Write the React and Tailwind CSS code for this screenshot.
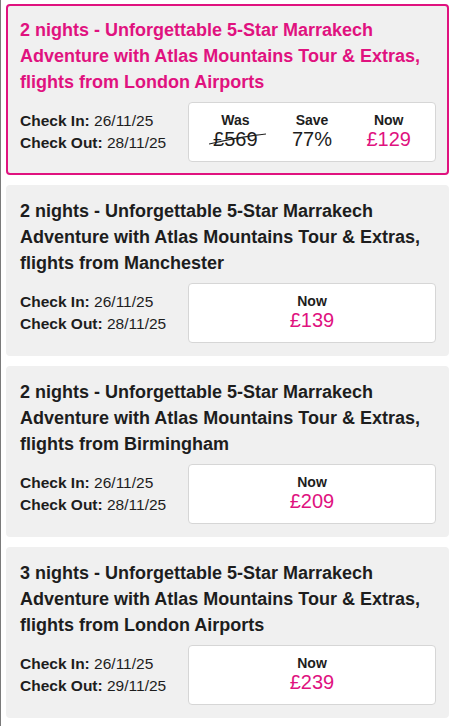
const deals = [
  {
    title: '2 nights - Unforgettable 5-Star Marrakech Adventure with Atlas Mountains Tour & Extras, flights from London Airports',
    checkIn: '26/11/25',
    checkOut: '28/11/25',
    was: '£569',
    save: '77%',
    now: '£129',
    active: true,
  },
  {
    title: '2 nights - Unforgettable 5-Star Marrakech Adventure with Atlas Mountains Tour & Extras, flights from Manchester',
    checkIn: '26/11/25',
    checkOut: '28/11/25',
    now: '£139',
  },
  {
    title: '2 nights - Unforgettable 5-Star Marrakech Adventure with Atlas Mountains Tour & Extras, flights from Birmingham',
    checkIn: '26/11/25',
    checkOut: '28/11/25',
    now: '£209',
  },
  {
    title: '3 nights - Unforgettable 5-Star Marrakech Adventure with Atlas Mountains Tour & Extras, flights from London Airports',
    checkIn: '26/11/25',
    checkOut: '29/11/25',
    now: '£239',
  },
];

function PriceCol({ label, children }) {
  return (
    <div className="flex flex-col items-center">
      <span className="text-[14px] leading-[16px] font-bold text-[#1d1d1d]">{label}</span>
      {children}
    </div>
  );
}

function DealCard({ deal }) {
  return (
    <div
      className={`rounded-[4px] border-2 bg-[#f0f0f0] pt-[11px] pb-[11px] pl-[12px] pr-[11px] ${
        deal.active ? 'border-[#e0127f]' : 'border-[#f0f0f0]'
      }`}
    >
      <h2
        className={`text-[18px] leading-[26px] font-bold mb-[7px] ${
          deal.active ? 'text-[#e0127f]' : 'text-[#1d1d1d]'
        }`}
      >
        {deal.title}
      </h2>
      <div className="flex items-center justify-between">
        <div className="text-[15.5px] leading-[22px] text-[#1d1d1d]">
          <p>
            <span className="font-bold">Check In:</span> {deal.checkIn}
          </p>
          <p>
            <span className="font-bold">Check Out:</span> {deal.checkOut}
          </p>
        </div>
        <div className="w-[248px] h-[60px] bg-white border border-[#d6d6d6] rounded-[4px] px-[8px] pb-[1px] flex flex-col justify-center">
          {deal.was ? (
            <div className="grid grid-cols-3">
              <PriceCol label="Was">
                <span className="relative text-[20px] leading-[23px] text-[#1d1d1d]">
                  {deal.was}
                  <svg
                    className="absolute left-[-4px] top-[4px]"
                    width="57"
                    height="14"
                    viewBox="0 0 57 14"
                  >
                    <path d="M0 12 Q 28 5 57 2" stroke="#1d1d1d" strokeWidth="1.1" fill="none" />
                  </svg>
                </span>
              </PriceCol>
              <PriceCol label="Save">
                <span className="text-[20px] leading-[23px] text-[#1d1d1d]">{deal.save}</span>
              </PriceCol>
              <PriceCol label="Now">
                <span className="text-[20px] leading-[23px] text-[#e0127f]">{deal.now}</span>
              </PriceCol>
            </div>
          ) : (
            <PriceCol label="Now">
              <span className="text-[20px] leading-[23px] text-[#e0127f]">{deal.now}</span>
            </PriceCol>
          )}
        </div>
      </div>
    </div>
  );
}

export default function App() {
  return (
    <div
      className="min-h-[726px] bg-white border-l border-[#7a7a7a] pl-[5px] pr-[5px] pt-[4px] pb-[8px] flex flex-col gap-[10px]"
      style={{ fontFamily: '"Liberation Sans", Arial, Helvetica, sans-serif' }}
    >
      {deals.map((d, i) => (
        <DealCard key={i} deal={d} />
      ))}
    </div>
  );
}
